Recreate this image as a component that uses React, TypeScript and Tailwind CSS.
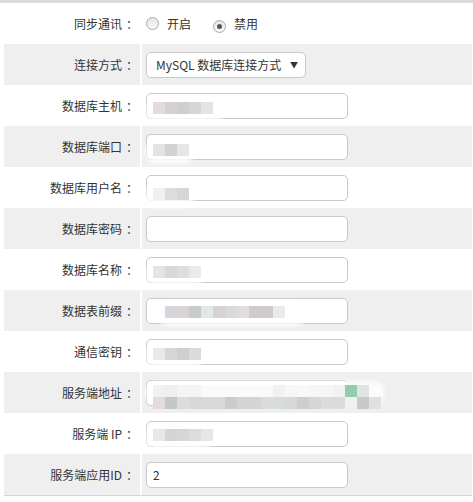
import React from "react";

type Mosaic = {
  left: number;
  top: number;
  lines: string[][];
  blob?: number;
};

type Field = {
  label: string;
  kind: "radio" | "select" | "input";
  value?: string;
  mosaic?: Mosaic;
};

const fields: Field[] = [
  { label: "同步通讯", kind: "radio" },
  { label: "连接方式", kind: "select" },
  {
    label: "数据库主机",
    kind: "input",
    mosaic: { left: 7, top: 9, blob: 80, lines: [["#e4dcdc", "#d4d2d2", "#cfcfcf", "#d6d6d6", "#e2e5e8"]] },
  },
  {
    label: "数据库端口",
    kind: "input",
    mosaic: { left: 7, top: 10, blob: 50, lines: [["#e6e2e2", "#d2d2d2", "#e6e6e6"]] },
  },
  {
    label: "数据库用户名",
    kind: "input",
    mosaic: { left: 7, top: 13, blob: 50, lines: [["#f0f0f0", "#dcdcdc", "#d6d6d6"]] },
  },
  { label: "数据库密码", kind: "input" },
  {
    label: "数据库名称",
    kind: "input",
    mosaic: { left: 7, top: 9, blob: 60, lines: [["#e8e4e4", "#d8d8d8", "#dedede", "#eaeaea"]] },
  },
  {
    label: "数据表前缀",
    kind: "input",
    mosaic: {
      left: 19,
      top: 8,
      blob: 150,
      lines: [["#d6d6da", "#d8d4d4", "#c8cccc", "#e4e8e4", "#d6d2d2", "#d8dadc", "#e2dcdc", "#cfcbcd", "#cfcbcd", "#eaeaea"]],
    },
  },
  {
    label: "通信密钥",
    kind: "input",
    mosaic: { left: 7, top: 9, blob: 60, lines: [["#ebe8e8", "#d6d6d6", "#cfcfcf", "#dadada"]] },
  },
  {
    label: "服务端地址",
    kind: "input",
    mosaic: {
      left: 7,
      top: 5,
      blob: 240,
      lines: [
        ["#f2f0f0", "#eef0ee", "#f4f4f4", "#f4f4f4", "#fafafa", "#fafafa", "#fafafa", "#fafafa", "#fafafa", "#fafafa", "#f0f2f2", "#f6f8f8", "#f8f8f8", "#f8f6f4", "#f4f6f8", "#f2f2f2", "#94ccb0", "#dfe5e2"],
        ["#e4dcdc", "#c4c8c4", "#dcdcdc", "#d8d8d8", "#d8dada", "#d8dada", "#cccccc", "#d4d4d4", "#d4d4d4", "#dadcd8", "#d8dcde", "#d8d8d8", "#cfcdd2", "#d6d6d6", "#dcdcdc", "#dadcd8", "#f0f0f0", "#c8c8c8", "#e0e0e0"],
      ],
    },
  },
  {
    label: "服务端 IP",
    kind: "input",
    mosaic: { left: 7, top: 8, blob: 70, lines: [["#e8e6e6", "#d4d4d4", "#d6d6d6", "#dcdcdc", "#e6e6e6"]] },
  },
  { label: "服务端应用ID", kind: "input", value: "2" },
];

function MosaicLayer({ m }: { m: Mosaic }) {
  return (
    <div className="pointer-events-none absolute" style={{ left: m.left, top: m.top }}>
      {m.blob ? (
        <div
          className="absolute -left-[8px] -top-[4px] h-[24px] rounded-full bg-white/80 blur-[2px]"
          style={{ width: m.blob }}
        />
      ) : null}
      <div className="relative flex flex-col">
        {m.lines.map((line, i) => (
          <div key={i} className="flex">
            {line.map((c, j) => (
              <div key={j} className="h-[12px] w-[12px]" style={{ background: c }} />
            ))}
          </div>
        ))}
      </div>
    </div>
  );
}

function Radio({ checked }: { checked?: boolean }) {
  return (
    <span className="inline-flex h-[13px] w-[13px] items-center justify-center rounded-full border border-[#a9a9a9] bg-gradient-to-b from-[#e6e6e6] to-[#f8f8f8]">
      {checked ? <span className="h-[5px] w-[5px] rounded-full bg-[#555]" /> : null}
    </span>
  );
}

function Value({ f }: { f: Field }) {
  if (f.kind === "radio") {
    return (
      <div className="flex items-center pl-[4px] text-[12px]">
        <Radio />
        <span className="ml-[8px]">开启</span>
        <span className="ml-[22px]">
          <Radio checked />
        </span>
        <span className="ml-[8px]">禁用</span>
      </div>
    );
  }
  if (f.kind === "select") {
    return (
      <div className="ml-[4px] flex h-[26px] w-[160px] items-center justify-between whitespace-nowrap rounded-[5px] border border-[#c8c8c8] bg-white pl-[9px] pr-[7px] text-[12px]">
        <span>MySQL 数据库连接方式</span>
        <span className="text-[8px]">▼</span>
      </div>
    );
  }
  return (
    <div className="relative ml-[4px] h-[26px] w-[202px]">
      <div className="flex h-full w-full items-center rounded-[5px] border border-[#c8c8c8] bg-white pl-[6px] text-[12px]">
        {f.value}
      </div>
      {f.mosaic ? <MosaicLayer m={f.mosaic} /> : null}
    </div>
  );
}

export default function App() {
  return (
    <div className="h-[502px] w-[473px] bg-white font-['Noto_Sans_CJK_SC','Noto_Sans',sans-serif] text-[#333]">
      <div className="border-t-[3px] border-[#dcdcdc] pl-[4px] pr-[1px]">
        {fields.map((f, i) => {
          const bg = i % 2 === 1 ? "bg-[#efefef]" : "bg-white";
          return (
            <div key={f.label} className="grid h-[41px] grid-cols-[136px_1fr] gap-x-[2px]">
              <div className={`flex items-center justify-end text-[12px] ${bg}`}>
                <span className="whitespace-nowrap">{f.label}</span>
                <span className="w-[18px] pl-[4px]">：</span>
              </div>
              <div className={`flex items-center ${bg}`}>
                <Value f={f} />
              </div>
            </div>
          );
        })}
        <div className="h-[1px] bg-[#d4d4d4]" />
      </div>
    </div>
  );
}
